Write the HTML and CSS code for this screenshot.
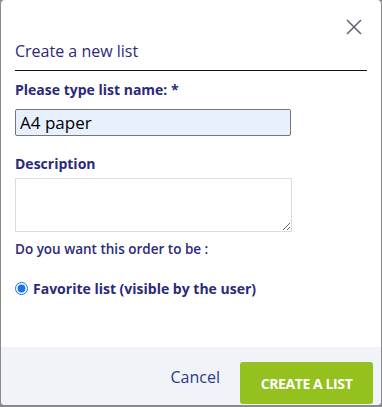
FILE: index.html
```html
<!DOCTYPE html>
<html>
<head>
<meta charset="utf-8">
<link rel="stylesheet" href="styles.css">
</head>
<body>
<div class="modal">
  <div class="modal-body">
    <div class="close-row">
      <button class="close" aria-label="Close">
        <svg width="16" height="16" viewBox="0 0 16 16"><path d="M1 1 L15 15 M15 1 L1 15" stroke="#5b6470" stroke-width="1.5" fill="none"/></svg>
      </button>
    </div>
    <h2 class="title">Create a new list</h2>
    <label class="label">Please type list name: *</label>
    <input class="name-input" type="text" value="A4 paper">
    <label class="label desc-label">Description</label>
    <textarea class="desc"></textarea>
    <p class="question">Do you want this order to be :</p>
    <label class="radio-row"><input type="radio" checked> <span>Favorite list (visible by the user)</span></label>
  </div>
  <div class="modal-footer">
    <button class="cancel">Cancel</button>
    <button class="create">CREATE A LIST</button>
  </div>
</div>
</body>
</html>
```
FILE: styles.css
```css
html, body {
  margin: 0;
  padding: 0;
  height: 100%;
}
body {
  background: #8a8a8a;
  font-family: "Open Sans", "Noto Sans", sans-serif;
  color: #2b2a7a;
  padding: 0 1px 0 1px;
  box-sizing: border-box;
}
.modal {
  background: #fff;
  border-radius: 4px;
  height: 405px;
  display: flex;
  flex-direction: column;
  overflow: hidden;
}
.modal-body {
  flex: 1;
  padding: 0 14px 0 14px;
  display: flex;
  flex-direction: column;
}
.close-row {
  display: flex;
  justify-content: flex-end;
  padding-top: 19px;
  padding-right: 5px;
}
.close {
  background: none;
  border: 0;
  padding: 0;
  width: 16px;
  height: 16px;
  cursor: pointer;
}
.close svg { display: block; }
.title {
  font-size: 16px;
  font-weight: 500;
  margin: 5px 0 0 0;
  padding-bottom: 8px;
  border-bottom: 1px solid #111;
  line-height: 22px;
}
.label {
  font-size: 14px;
  font-weight: 700;
  margin-top: 9px;
  line-height: 19px;
}
.name-input {
  margin-top: 10px;
  width: 276px;
  height: 27px;
  box-sizing: border-box;
  background: #e8f0fe;
  border: 1px solid #767676;
  border-radius: 2px;
  font-family: "Open Sans", sans-serif;
  font-size: 17px;
  color: #000;
  padding: 0 4px;
}
.desc-label {
  margin-top: 18px;
}
.desc {
  margin-top: 5px;
  width: 277px;
  height: 54px;
  box-sizing: border-box;
  border: 1px solid #dcdcdc;
  resize: vertical;
}
.question {
  margin: 8px 0 0 0;
  font-size: 13.5px;
  font-weight: 600;
  line-height: 19px;
}
.radio-row {
  margin-top: 20px;
  display: flex;
  align-items: center;
  font-size: 14px;
  font-weight: 700;
  line-height: 19px;
}
.radio-row input {
  margin: 0 5px 0 0;
  width: 13px;
  height: 13px;
  accent-color: #1a73e8;
}
.modal-footer {
  background: #f0f3f8;
  height: 58px;
  display: flex;
  justify-content: flex-end;
  align-items: center;
  padding: 0 8px 0 0;
  gap: 20px;
}
.cancel {
  background: none;
  border: 0;
  font-family: "Open Sans", sans-serif;
  font-size: 16px;
  color: #2f3a86;
  padding: 0;
  margin-top: 2px;
}
.create {
  background: #95c11f;
  border: 0;
  border-radius: 3px;
  color: #fff;
  font-family: "Open Sans", sans-serif;
  font-weight: 700;
  font-size: 14px;
  letter-spacing: -0.4px;
  width: 133px;
  height: 42px;
  margin-top: 14px;
}
```
